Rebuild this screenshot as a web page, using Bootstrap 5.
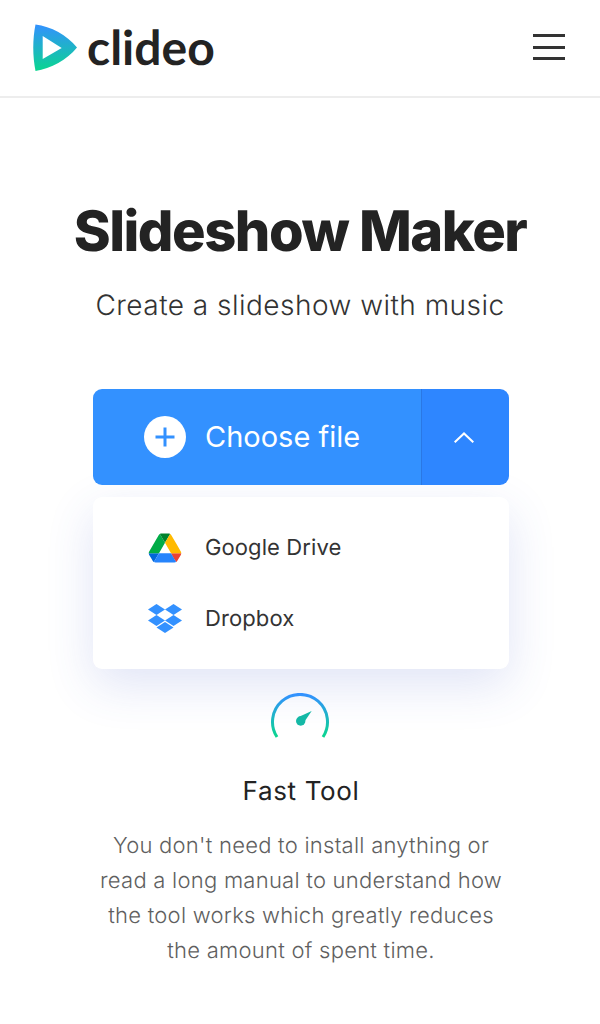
<!DOCTYPE html>
<html lang="en">

<head>
    <meta charset="UTF-8">
    <title>Slideshow Maker</title>
    <link href="https://cdn.jsdelivr.net/npm/bootstrap@5.3.0/dist/css/bootstrap.min.css" rel="stylesheet">
    <style>
        body {
            font-family: "Inter", "Liberation Sans", sans-serif;
            color: #232323;
            background: #fff;
            text-rendering: geometricPrecision;
        }

        .top-bar {
            height: 98px;
            padding: 0 35px 0 32px;
            border-bottom: 2px solid #ededed;
        }

        .brand-name {
            font-family: "Lato", "Liberation Sans", sans-serif;
            font-weight: 700;
            font-size: 48px;
            line-height: 1;
            color: #232323;
            margin-left: 9px;
            text-decoration: none;
        }

        .burger {
            width: 32px;
            background: none;
            border: 0;
            padding: 0;
            gap: 8.5px;
            margin-top: -2px;
        }

        .burger span {
            display: block;
            height: 3px;
            background: #333;
        }

        .hero-title {
            font-size: 56px;
            font-weight: 800;
            letter-spacing: -1.5px;
            line-height: 66px;
            margin: 100px 0 0;
            color: #232323;
        }

        .hero-sub {
            font-size: 28px;
            font-weight: 300;
            line-height: 40px;
            letter-spacing: 0.48px;
            margin: 21px 0 0;
            color: #333;
        }

        .picker {
            width: 416px;
            margin: 64px 0 0 93px;
        }

        .choose-group {
            height: 96px;
            border-radius: 9px;
            overflow: hidden;
        }

        .choose-main {
            flex: 1;
            background: #3391ff;
            color: #fff;
            border: 0;
            padding: 0 0 0 51px;
            font-size: 29px;
            font-weight: 400;
            gap: 19px;
        }

        .choose-toggle {
            width: 88px;
            background: #2e86ff;
            border: 0;
            border-left: 1px solid #2a78e4;
            padding: 0 3px 0 0;
        }

        .plus-circle {
            width: 42px;
            height: 42px;
        }

        .source-menu {
            margin-top: 12px;
            height: 172px;
            border-radius: 9px;
            background: #fff;
            box-shadow: 0 16px 48px rgba(60, 90, 200, 0.16);
            padding: 15px 0;
        }

        .source-item {
            height: 71px;
            padding: 1px 0 0 55px;
            font-size: 22px;
            color: #333;
            letter-spacing: 0.1px;
        }

        .source-item svg {
            width: 34px;
            flex: none;
            margin: -1px 23px 0 0;
        }

        .speed-icon {
            display: block;
            margin: 24px auto 0;
        }

        .feature-title {
            font-size: 26px;
            font-weight: 400;
            line-height: 36px;
            letter-spacing: 0.65px;
            margin: 35px 0 0;
            padding-left: 2px;
            color: #232323;
        }

        .feature-text {
            font-size: 22px;
            font-weight: 300;
            line-height: 35px;
            letter-spacing: 0.25px;
            color: #5f5f5f;
            margin: 19px 0 0;
            padding-left: 2px;
        }
    </style>
</head>

<body>

    <!-- Header -->
    <header class="top-bar d-flex align-items-center justify-content-between">
        <div class="d-flex align-items-center">
            <svg width="46" height="50" viewBox="0 0 46 50">
                <defs>
                    <linearGradient id="logoGrad" x1="0" y1="0" x2="0" y2="1">
                        <stop offset="0" stop-color="#3391ff" />
                        <stop offset="1" stop-color="#0ad68f" />
                    </linearGradient>
                </defs>
                <path fill="url(#logoGrad)" fill-rule="evenodd" d="M3.500 1.500C19 3.500 35 12 45 24.500C35 37 19 45.500 3.500 48C0.500 33 0.500 16 3.500 1.500ZM10.700 13V36L29.700 25Z" />
            </svg>
            <a class="brand-name" href="#">clideo</a>
        </div>
        <button class="burger d-flex flex-column" aria-label="Menu">
            <span></span><span></span><span></span>
        </button>
    </header>

    <main class="text-center">
        <h1 class="hero-title">Slideshow Maker</h1>
        <p class="hero-sub">Create a slideshow with music</p>

        <!-- File picker -->
        <div class="picker">
            <div class="choose-group d-flex">
                <button class="choose-main d-flex align-items-center">
                    <svg class="plus-circle" viewBox="0 0 42 42">
                        <circle cx="21" cy="21" r="21" fill="#fff" />
                        <path d="M21 11.500V30.500M11.500 21H30.500" stroke="#3391ff" stroke-width="3" fill="none" />
                    </svg>
                    Choose file
                </button>
                <button class="choose-toggle d-flex align-items-center justify-content-center" aria-label="Toggle sources">
                    <svg width="20" height="11" viewBox="0 0 20 11">
                        <path d="M0.700 10.300L10 1.500L19.300 10.300" stroke="#fff" stroke-width="2" fill="none" />
                    </svg>
                </button>
            </div>

            <div class="source-menu text-start">
                <div class="source-item d-flex align-items-center">
                    <svg height="30" viewBox="-2 0 91.300 78">
                        <path fill="#0066da" d="m6.600 66.850 3.850 6.650c.8 1.400 1.950 2.500 3.300 3.300l13.750-23.800h-27.500c0 1.550.4 3.100 1.200 4.500z" />
                        <path fill="#00ac47" d="m43.650 25-13.750-23.800c-1.350.8-2.500 1.900-3.300 3.300l-25.400 44a9.060 9.060 0 0 0 -1.200 4.500h27.500z" />
                        <path fill="#ea4335" d="m73.550 76.800c1.350-.8 2.500-1.900 3.300-3.300l1.600-2.750 7.650-13.250c.8-1.400 1.200-2.950 1.200-4.500h-27.502l5.852 11.500z" />
                        <path fill="#00832d" d="m43.650 25 13.750-23.800c-1.350-.8-2.900-1.200-4.500-1.200h-18.500c-1.600 0-3.150.45-4.500 1.200z" />
                        <path fill="#2684fc" d="m59.800 53h-32.300l-13.750 23.800c1.350.8 2.900 1.200 4.500 1.200h50.800c1.600 0 3.150-.45 4.500-1.200z" />
                        <path fill="#ffba00" d="m73.400 26.500-12.700-22c-.8-1.400-1.950-2.500-3.300-3.300l-13.750 23.800 16.150 28h27.450c0-1.550-.4-3.100-1.200-4.500z" />
                    </svg>
                    Google Drive
                </div>
                <div class="source-item d-flex align-items-center">
                    <svg height="29" viewBox="0 0 34 29">
                        <path fill="#3391ff" d="M8.500 0L17 5.500L8.500 11L0 5.500Z" />
                        <path fill="#3391ff" d="M25.500 0L34 5.500L25.500 11L17 5.500Z" />
                        <path fill="#3391ff" d="M8.500 11L17 16.500L8.500 22L0 16.500Z" />
                        <path fill="#3391ff" d="M25.500 11L34 16.500L25.500 22L17 16.500Z" />
                        <path fill="#3391ff" d="M17 18L25.500 23.500L17 29L8.500 23.500Z" />
                    </svg>
                    Dropbox
                </div>
            </div>
        </div>

        <!-- Feature -->
        <svg class="speed-icon" width="60" height="46" viewBox="0 0 60 46">
            <defs>
                <linearGradient id="speedGrad" x1="0" y1="0" x2="0" y2="1">
                    <stop offset="0" stop-color="#3391ff" />
                    <stop offset="1" stop-color="#0ad68f" />
                </linearGradient>
            </defs>
            <path d="M7 44A27.500 27.500 0 1 1 53 44" stroke="url(#speedGrad)" stroke-width="3" fill="none" />
            <circle cx="30.700" cy="28" r="4.700" fill="#14b8a6" />
            <path d="M41.700 18L28.500 24L33.500 30Z" fill="#14b8a6" />
        </svg>
        <h2 class="feature-title">Fast Tool</h2>
        <p class="feature-text">You don't need to install anything or<br>read a long manual to understand how<br>the tool works which greatly reduces<br>the amount of spent time.</p>
    </main>

    <script src="https://cdn.jsdelivr.net/npm/bootstrap@5.3.0/dist/js/bootstrap.bundle.min.js"></script>
</body>

</html>
